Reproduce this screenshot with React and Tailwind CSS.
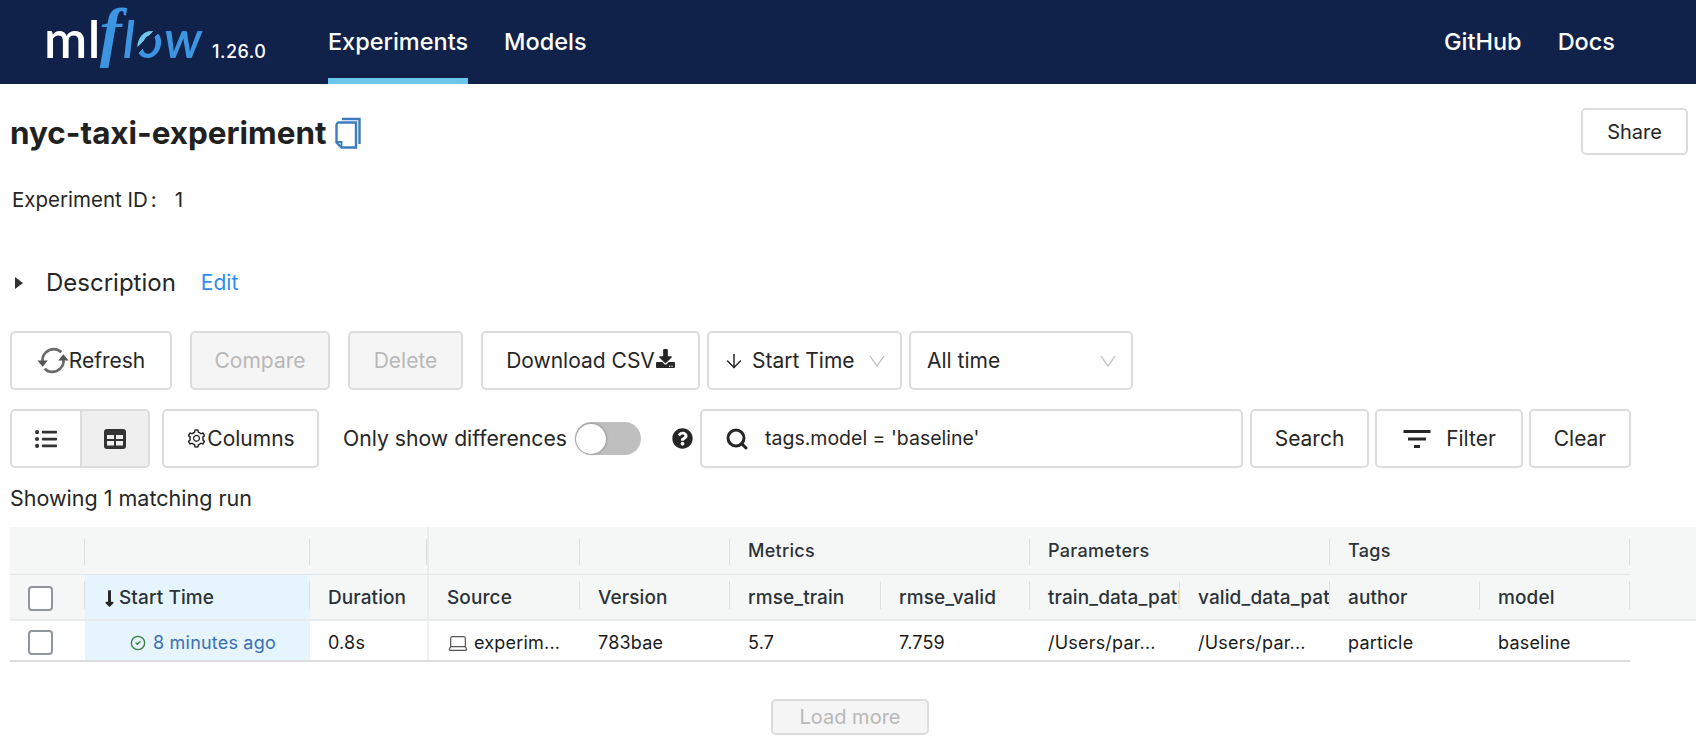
import { ArrowDown, CircleCheck, Laptop, Search } from 'lucide-react'
import { AiOutlineSetting } from 'react-icons/ai'
import { FaDownload, FaListUl, FaLongArrowAltDown, FaQuestionCircle } from 'react-icons/fa'
import { MdFilterList } from 'react-icons/md'

const box = 'h-[59px] flex items-center rounded-[5px] border-2 border-[#dcdcdc] text-[21px]'
const btn = `${box} justify-center bg-white text-[#262626] shadow-[0_2px_0_rgba(0,0,0,0.015)]`
const off = `${box} justify-center bg-[#f5f5f5] text-[#b8b8b8]`
const select = `${box} justify-between bg-white text-[#262626]`

const columns = 'grid grid-cols-[75px_225px_119px_151px_150px_151px_149px_150px_150px_150px_150px]'

const Logo = () => (
  <div className="flex items-baseline font-['Lato',sans-serif] text-[52px] leading-none ml-[44px] w-[284px] shrink-0 mb-[8px]">
    <span className="font-semibold text-white tracking-[0.5px]">ml</span>
    <span className="font-['Liberation_Serif',serif] italic text-[#3d94e0] text-[66px] leading-[0] ml-[-1px] mr-[1px] font-bold -translate-y-[4px]">f</span>
    <span className="italic font-semibold text-[#3d94e0] tracking-[1px]">l</span>
    <span className="italic font-semibold tracking-[1px] bg-[linear-gradient(135deg,#6dc6ec_46%,#10224a_46%,#10224a_54%,#3d94e0_54%)] bg-clip-text text-transparent">o</span>
    <span className="italic font-semibold text-[#3d94e0] text-[52px]">w</span>
    <span className="font-['Inter',sans-serif] text-white text-[18px] font-medium tracking-[0.5px] ml-[10px]">1.26.0</span>
  </div>
)

const CopyIcon = () => (
  <svg width="26" height="32" viewBox="0 0 26 32" fill="none" stroke="#3e7cc0" strokeWidth="2.4">
    <path d="M7 2h17.5v25" />
    <path d="M4 5.5h17v25H6.5L1.5 25.500V8a2.500 2.500 0 0 1 2.500-2.500z" />
    <path d="M1.500 25h5v5" strokeWidth="1.800" />
  </svg>
)

const RefreshIcon = () => (
  <svg width="32" height="27" viewBox="0 0 30 26" fill="none" className="shrink-0">
    <path d="M5 14C4 7 10 2 16 2c3 0 5 1 7 3" stroke="#6b6b6b" strokeWidth="2.600" />
    <path d="M25 12c1 7-5 12-11 12-3 0-5-1-7-3" stroke="#6b6b6b" strokeWidth="2.600" />
    <path d="M0 13h10l-5 6z" fill="#555" />
    <path d="M20 13h10l-5-6z" fill="#555" />
  </svg>
)

const TableIcon = () => (
  <svg width="22" height="20" viewBox="0 0 22 20" fill="#333">
    <path fillRule="evenodd" d="M3 0h16a3 3 0 0 1 3 3v14a3 3 0 0 1-3 3H3a3 3 0 0 1-3-3V3a3 3 0 0 1 3-3zM3 6v4h7V6zm9 0v4h7V6zM3 12v4.500h7V12zm9 0v4.500h7V12z" />
  </svg>
)

const Chevron = () => (
  <svg width="16" height="12" viewBox="0 0 16 12" fill="none" stroke="#bdbdbd" strokeWidth="1.300">
    <path d="M1 1l7 10 7-10" />
  </svg>
)

const Checkbox = () => <span className="block w-[25px] h-[25px] rounded-[4px] border-2 border-[#8f979c] bg-white" />

const HeadCell = ({ children, active, divider = true, thick }) => (
  <div className={`relative flex items-center pl-[18px] pt-[2px] h-[44px] text-[19px] tracking-[0.1px] text-[#2b3238] font-medium whitespace-nowrap overflow-hidden ${active ? 'bg-[#e6f4fd]' : ''} ${thick ? 'border-r-2 border-[#e9ecec]' : ''}`}>
    {children}
    {divider && <span className="absolute right-0 top-[6px] h-[28px] w-px bg-[#dde0e0]" />}
  </div>
)

const GroupCell = ({ children, span = '', thick }) => (
  <div className={`relative flex items-center pl-[18px] h-[47px] text-[18px] tracking-[0.3px] text-[#2b3238] font-medium ${span} ${thick ? 'border-r-2 border-[#e9ecec]' : ''}`}>
    {children}
    <span className="absolute right-0 top-[12px] h-[26px] w-px bg-[#dde0e0]" />
  </div>
)

const BodyCell = ({ children, active, thick }) => (
  <div className={`flex items-center pl-[18px] pt-[4px] h-[39px] text-[#1a1a1a] whitespace-nowrap overflow-hidden ${active ? 'bg-[#e6f4fd]' : ''} ${thick ? 'border-r-2 border-[#f1f1f1]' : ''}`}>
    {children}
  </div>
)

export default function App() {
  return (
    <div className="min-h-[748px] bg-white font-['Inter',sans-serif] text-[#262626] overflow-hidden">
      {/* Top bar */}
      <header className="h-[84px] bg-[#10224a] flex items-center text-white">
        <Logo />
        <nav className="flex h-full text-[23.500px] font-medium gap-[36px]">
          <a className="h-full flex items-center border-b-[6px] border-[#6cc6ec] pt-[6px] w-[140px] justify-center">Experiments</a>
          <a className="h-full flex items-center">Models</a>
        </nav>
        <div className="ml-auto flex gap-[36px] text-[23.500px] font-medium pr-[81px]">
          <a>GitHub</a>
          <a>Docs</a>
        </div>
      </header>

      <div className="flex items-start justify-between pl-[10px] pr-[8px] pt-[24px]">
        <div className="flex items-center gap-[9px] pt-[5px]">
          <h1 className="text-[31.400px] font-bold leading-[40px] text-[#212121]">nyc-taxi-experiment</h1>
          <CopyIcon />
        </div>
        <button className="w-[107px] h-[47px] rounded-[5px] border-2 border-[#dcdcdc] text-[20px]">Share</button>
      </div>

      <div className="flex pl-[12px] mt-[32px] text-[20.500px] leading-[26px]">
        <span>Experiment ID</span>
        <span className="ml-[3px]">:</span>
        <span className="ml-[18px]">1</span>
      </div>

      <div className="flex items-center pl-[15px] mt-[53px] h-[34px]">
        <svg width="8" height="12" viewBox="0 0 8 12" fill="#333"><path d="M0 0l8 6-8 6z" /></svg>
        <span className="ml-[23px] text-[24px]">Description</span>
        <a className="ml-[25px] text-[21px] text-[#2f8cf5]">Edit</a>
      </div>

      {/* Action row */}
      <div className="flex pl-[10px] mt-[31px]">
        <button className={`${btn} w-[162px]`}><RefreshIcon />Refresh</button>
        <button className={`${off} w-[140px] ml-[18px]`}>Compare</button>
        <button className={`${off} w-[115px] ml-[18px]`}>Delete</button>
        <button className={`${btn} w-[219px] ml-[18px]`}>Download CSV<FaDownload className="text-[19px] ml-px mb-1" /></button>
        <button className={`${select} w-[195px] ml-[7px] pl-[14px] pr-[15px]`}>
          <span className="flex items-center gap-[7px]"><ArrowDown size={22} strokeWidth={1.6} />Start Time</span><Chevron />
        </button>
        <button className={`${select} w-[224px] ml-[7px] pl-[16px] pr-[15px]`}>All time<Chevron /></button>
      </div>

      {/* Filter row */}
      <div className="flex items-center pl-[10px] mt-[19px]">
        <div className="flex h-[59px] w-[140px] rounded-[5px] border-2 border-[#dcdcdc] overflow-hidden">
          <span className="w-[68px] flex items-center justify-center"><FaListUl className="text-[22px] text-[#333]" /></span>
          <span className="flex-1 flex items-center justify-center bg-[#efefef] border-l-2 border-[#dcdcdc]"><TableIcon /></span>
        </div>
        <button className={`${btn} w-[157px] ml-[12px]`}><AiOutlineSetting className="text-[21px]" />Columns</button>
        <span className="ml-[24px] text-[21.200px] w-[224px] whitespace-nowrap">Only show differences</span>
        <span className="ml-[8px] w-[66px] h-[33px] rounded-full bg-[#bfbfbf] flex items-center pl-[1px]">
          <span className="w-[30px] h-[30px] rounded-full bg-white shadow-[0_0_3px_rgba(0,0,0,0.4)]" />
        </span>
        <FaQuestionCircle className="ml-[31px] text-[21px] text-[#262626]" />
        <div className={`${btn} w-[543px] ml-[7px] !justify-start pl-[23px]`}>
          <Search size={24} strokeWidth={3} className="text-[#262626]" />
          <span className="ml-[16px] text-[19.500px]">tags.model = 'baseline'</span>
        </div>
        <button className={`${btn} w-[119px] ml-[7px]`}>Search</button>
        <button className={`${btn} w-[148px] ml-[6px] gap-[11px]`}><MdFilterList className="text-[36px] -ml-[3px]" />Filter</button>
        <button className={`${btn} w-[102px] ml-[6px]`}>Clear</button>
      </div>

      <div className="pl-[10px] mt-[16px] text-[21.500px] leading-[28px]">Showing 1 matching run</div>

      {/* Runs table */}
      <div className="mt-[15px] ml-[10px] text-[18px] tracking-[0.2px]">
        <div className="bg-[#f5f7f7] border-b-2 border-[#e9ecec]">
          <div className={`${columns} border-b border-[#e4e7e7] w-[1620px]`}>
            <GroupCell />
            <GroupCell />
            <GroupCell thick />
            <GroupCell />
            <GroupCell />
            <GroupCell span="col-span-2">Metrics</GroupCell>
            <GroupCell span="col-span-2">Parameters</GroupCell>
            <GroupCell span="col-span-2">Tags</GroupCell>
          </div>
          <div className={columns}>
            <HeadCell><Checkbox /></HeadCell>
            <HeadCell active><FaLongArrowAltDown className="text-[#262626] -ml-[3px]" />Start Time</HeadCell>
            <HeadCell thick divider={false}>Duration</HeadCell>
            <HeadCell>Source</HeadCell>
            <HeadCell>Version</HeadCell>
            <HeadCell>rmse_train</HeadCell>
            <HeadCell>rmse_valid</HeadCell>
            <HeadCell>train_data_path</HeadCell>
            <HeadCell>valid_data_path</HeadCell>
            <HeadCell>author</HeadCell>
            <HeadCell>model</HeadCell>
          </div>
        </div>
        <div className={`${columns} w-[1620px] border-b-2 border-[#dcdcdc]`}>
          <BodyCell><Checkbox /></BodyCell>
          <BodyCell active>
            <span className="flex items-center gap-[7px] pl-[27px] text-[#3b6fb6]">
              <CircleCheck size={16} className="text-[#3c7f46]" />8 minutes ago
            </span>
          </BodyCell>
          <BodyCell thick>0.8s</BodyCell>
          <BodyCell><Laptop size={22} strokeWidth={1.3} className="shrink-0 mr-[5px] text-[#555]" />experim...</BodyCell>
          <BodyCell>783bae</BodyCell>
          <BodyCell>5.7</BodyCell>
          <BodyCell>7.759</BodyCell>
          <BodyCell>/Users/par...</BodyCell>
          <BodyCell>/Users/par...</BodyCell>
          <BodyCell>particle</BodyCell>
          <BodyCell>baseline</BodyCell>
        </div>
      </div>

      <div className="flex justify-center w-[1700px] mt-[37px]">
        <button className="w-[158px] h-[36px] rounded-[5px] border-2 border-[#dcdcdc] bg-[#f5f5f5] text-[20px] text-[#b8b8b8]">Load more</button>
      </div>
    </div>
  )
}
